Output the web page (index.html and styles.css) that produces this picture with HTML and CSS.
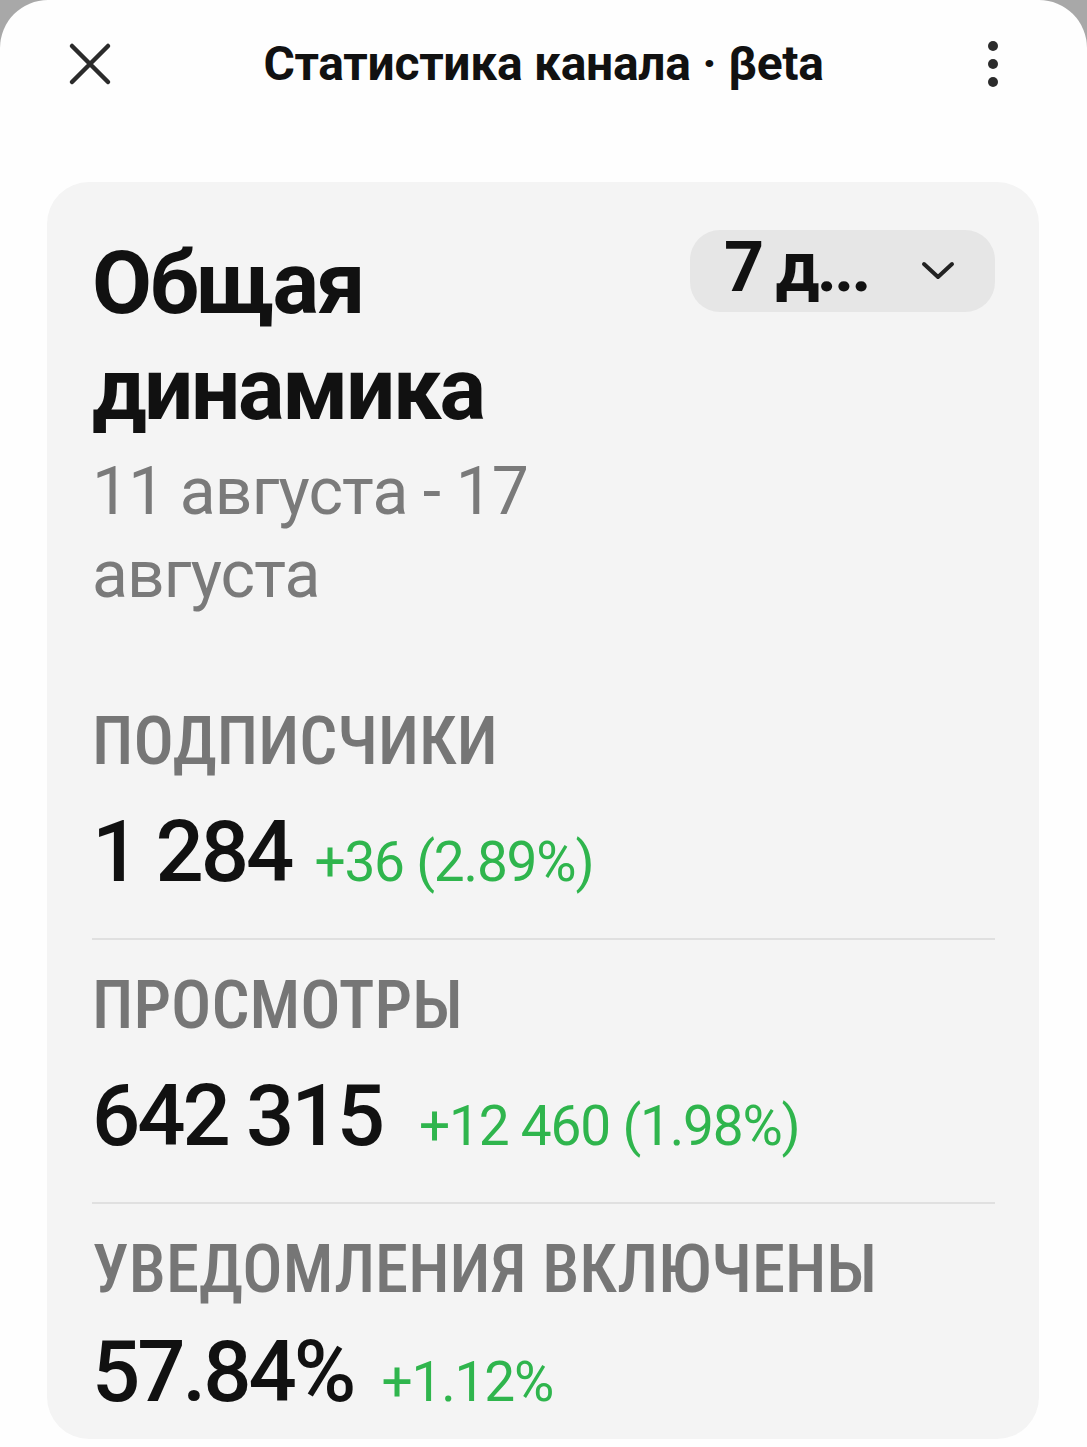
FILE: index.html
```html
<!DOCTYPE html>
<html lang="ru">
<head>
<meta charset="utf-8">
<title>Статистика канала</title>
<link rel="stylesheet" href="styles.css">
</head>
<body>
<div class="screen">
  <header class="topbar">
    <button class="icon-btn close" aria-label="Закрыть">
      <svg width="44" height="44" viewBox="0 0 44 44"><path d="M4 4 L40 40 M40 4 L4 40" stroke="#2b2b2b" stroke-width="4.5" stroke-linecap="round" fill="none"/></svg>
    </button>
    <h1 class="topbar-title">Статистика канала · βeta</h1>
    <button class="icon-btn more" aria-label="Ещё">
      <svg width="12" height="48" viewBox="0 0 12 48"><circle cx="6" cy="6" r="5" fill="#2b2b2b"/><circle cx="6" cy="24" r="5" fill="#2b2b2b"/><circle cx="6" cy="42" r="5" fill="#2b2b2b"/></svg>
    </button>
  </header>

  <section class="card">
    <div class="card-head">
      <div class="card-titles">
        <h2 class="card-title">Общая динамика</h2>
        <p class="card-date">11 августа - 17 августа</p>
      </div>
      <button class="period">
        <span class="period-text">7 д...</span>
        <svg width="34" height="20" viewBox="0 0 34 20"><path d="M3 3 L17 16 L31 3" stroke="#222" stroke-width="4" stroke-linecap="round" stroke-linejoin="round" fill="none"/></svg>
      </button>
    </div>

    <div class="stat">
      <div class="stat-label">Подписчики</div>
      <div class="stat-row">
        <span class="stat-value">1 284</span>
        <span class="stat-delta delta-first">+36 (2.89%)</span>
      </div>
    </div>
    <div class="divider"></div>
    <div class="stat">
      <div class="stat-label">Просмотры</div>
      <div class="stat-row">
        <span class="stat-value">642 315</span>
        <span class="stat-delta">+12 460 (1.98%)</span>
      </div>
    </div>
    <div class="divider"></div>
    <div class="stat stat-last">
      <div class="stat-label">Уведомления включены</div>
      <div class="stat-row">
        <span class="stat-value">57.84%</span>
        <span class="stat-delta">+1.12%</span>
      </div>
    </div>
  </section>
</div>
</body>
</html>
```

FILE: styles.css
```css
* { box-sizing: border-box; }
html, body { margin: 0; padding: 0; }
body {
  background: #a8a8a8;
  font-family: Roboto, "Noto Sans", sans-serif;
  color: #111;
}
.screen {
  background: #fefefe;
  border-radius: 48px 48px 0 0;
  min-height: 1447px;
  overflow: hidden;
}
.topbar {
  height: 127px;
  display: grid;
  grid-template-columns: 1fr auto 1fr;
  align-items: center;
  padding: 0 68px;
}
.icon-btn {
  background: none;
  border: 0;
  padding: 0;
  display: flex;
}
.close { justify-self: start; }
.more { justify-self: end; margin-right: 20px; }
.topbar-title {
  margin: 0;
  font-size: 48px;
  line-height: 1.2;
  font-weight: 700;
  letter-spacing: -0.3px;
  color: #111;
  white-space: nowrap;
}
.card {
  margin: 55px 48px 10px 47px;
  background: #f4f4f4;
  border-radius: 42px;
  padding: 48px 44px 17px 45px;
}
.card-head {
  display: flex;
  align-items: flex-start;
  gap: 24px;
}
.card-titles { flex: 1; }
.card-title {
  margin: 0;
  font-size: 87px;
  line-height: 106px;
  font-weight: 700;
  letter-spacing: -2.3px;
  color: #111;
}
.card-date {
  margin: 8px 0 0;
  font-size: 66px;
  line-height: 83px;
  font-weight: 400;
  letter-spacing: -0.9px;
  color: #7a7a7a;
}
.period {
  flex: none;
  width: 305px;
  height: 82px;
  border: 0;
  border-radius: 30px;
  background: #e6e6e6;
  display: flex;
  align-items: center;
  justify-content: space-between;
  padding: 0 40px 0 34px;
  font-family: inherit;
}
.period-text {
  font-size: 70px;
  line-height: 1;
  font-weight: 700;
  letter-spacing: -3px;
  color: #111;
  margin-top: -8px;
}
.stat { padding-top: 85px; }
.divider + .stat { padding-top: 25px; }
.stat-label {
  font-size: 67px;
  line-height: 80px;
  font-weight: 500;
  font-stretch: 87.5%;
  color: #767676;
  text-transform: uppercase;
}
.stat-row {
  margin-top: 21px;
  display: flex;
  align-items: baseline;
  padding-bottom: 36px;
}
.stat-last .stat-row { margin-top: 13px; padding-bottom: 0; }
.stat-value {
  font-size: 85px;
  line-height: 100px;
  font-weight: 500;
  letter-spacing: -3px;
  color: #111;
}
.stat-delta {
  font-size: 55px;
  font-weight: 400;
  letter-spacing: -1.2px;
  color: #2fb54d;
  margin-left: 37px;
}
.stat-delta.delta-first { margin-left: 23px; }
.stat-last .stat-delta { margin-left: 28px; }
.divider {
  height: 2px;
  background: #e0e0e0;
}
```
